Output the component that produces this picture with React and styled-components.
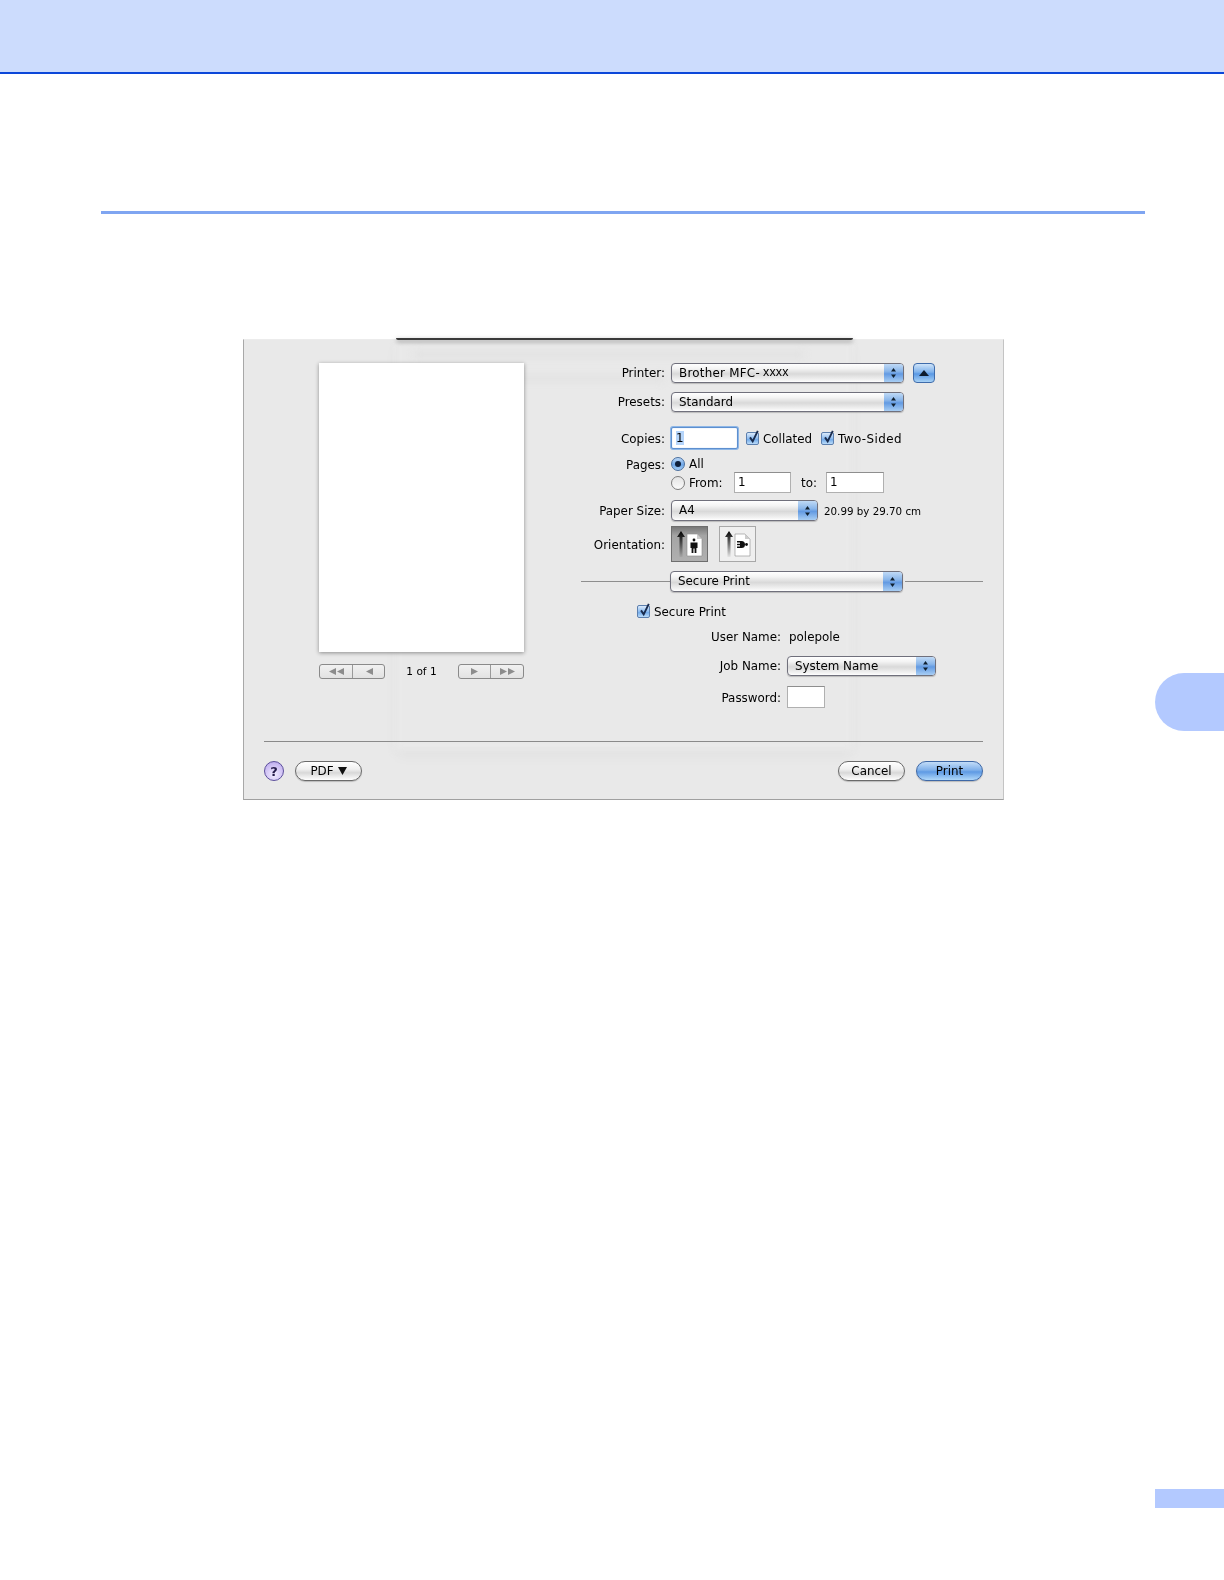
import React from "react";
import styled, { createGlobalStyle } from "styled-components";

const Global = createGlobalStyle`
  html, body { margin: 0; padding: 0; background: #fff; }
  body { font-family: "DejaVu Sans", "Liberation Sans", sans-serif; }
`;

const Page = styled.div`
  width: 1224px;
  height: 1580px;
  overflow: hidden;
  display: flex;
  flex-direction: column;
`;
const Header = styled.header`
  height: 72px;
  flex: none;
  background: #ccdcfd;
  border-bottom: 2px solid #0b47d9;
`;
const Rule = styled.div`
  height: 3px;
  flex: none;
  margin: 137px 79px 0 101px;
  background: #7fa5f1;
`;
const Middle = styled.div`
  display: flex;
  align-items: flex-start;
  margin: 125px 0 0 243px;
`;
const Tab = styled.div`
  width: 69px;
  height: 58px;
  margin: 334px 0 0 151px;
  flex: none;
  background: #b3c9ff;
  border-radius: 29px 0 0 29px;
`;
const FooterTab = styled.div`
  width: 69px;
  height: 19px;
  margin-top: 689px;
  align-self: flex-end;
  background: #b3c9ff;
`;

const Dialog = styled.section`
  position: relative;
  isolation: isolate;
  width: 761px;
  height: 461px;
  flex: none;
  box-sizing: border-box;
  background: #e9e9e9;
  border-left: 1px solid #a8a8a8;
  border-right: 1px solid #c4c4c4;
  border-bottom: 1px solid #a0a0a0;
  border-top: 1px solid #ececec;
  color: #000;
  font-size: 11.9px;
  filter: blur(0.3px);
  display: flex;
  flex-direction: column;
`;
const Ghost = styled.div`
  position: absolute;
  z-index: -1;
  left: 152px;
  top: 0;
  width: 456px;
  height: 410px;
  background: #e9e9e9;
  box-shadow: 0 6px 12px rgba(0, 0, 0, 0.035);
  filter: blur(3px);
`;
const GhostBar = styled.div`
  position: absolute;
  z-index: -1;
  left: ${(p) => p.$left}px;
  top: ${(p) => p.$top}px;
  width: ${(p) => p.$width}px;
  height: 5px;
  background: #dfdfdf;
  filter: blur(4px);
`;
const WindowEdge = styled.div`
  position: absolute;
  left: 152px;
  top: -2px;
  width: 457px;
  height: 2px;
  background: #3a3a3a;
  border-radius: 0 0 3px 3px;
  box-shadow: 0 2px 4px rgba(0, 0, 0, 0.4);
`;

const Body = styled.div`
  display: flex;
  align-items: flex-start;
  flex: none;
  height: 401px;
`;
const Preview = styled.div`
  width: 205px;
  margin: 23px 0 0 75px;
  flex: none;
  display: flex;
  flex-direction: column;
`;
const Sheet = styled.div`
  height: 289px;
  background: #fff;
  box-shadow: 0 1px 4px rgba(0, 0, 0, 0.4);
`;
const Pager = styled.div`
  display: flex;
  align-items: center;
  justify-content: space-between;
  margin-top: 12px;
  height: 15px;
`;
const PagerCount = styled.span`
  font-size: 10.6px;
  position: relative;
  top: -1px;
`;
const PagerGroup = styled.div`
  width: 66px;
  height: 15px;
  box-sizing: border-box;
  display: flex;
  border: 1px solid #8a8a8a;
  border-radius: 3px;
  background: linear-gradient(#f1f1f1, #e2e2e2);
`;
const PagerBtn = styled.div`
  flex: ${(p) => p.$grow};
  display: flex;
  align-items: center;
  justify-content: center;
  & + & { border-left: 1px solid #9a9a9a; }
`;

const Form = styled.div`
  width: 402px;
  margin: 23px 0 0 57px;
  flex: none;
  display: flex;
  flex-direction: column;
`;
const Row = styled.div`
  display: flex;
  align-items: center;
  gap: ${(p) => p.$gap ?? 7}px;
  height: ${(p) => p.$h}px;
  margin-top: ${(p) => p.$top ?? 0}px;
  padding-left: ${(p) => p.$indent ?? 0}px;
`;
const Label = styled.span`
  width: ${(p) => p.$w ?? 84}px;
  margin-right: ${(p) => (p.$w ? 0 : -1)}px;
  padding-top: ${(p) => (p.$nudge ? 2 : 0)}px;
  flex: none;
  text-align: right;
  white-space: nowrap;
`;
const Value = styled.span`
  margin-left: ${(p) => p.$left ?? 2}px;
  padding-top: ${(p) => (p.$nudge ? 2 : 0)}px;
  white-space: nowrap;
  font-size: ${(p) => p.$size ?? 11.9}px;
`;
const SelectBox = styled.div`
  width: ${(p) => p.$w}px;
  height: ${(p) => p.$h ?? 20}px;
  flex: none;
  box-sizing: border-box;
  display: flex;
  border: 1px solid #70707c;
  border-radius: 4px;
  overflow: hidden;
  background: linear-gradient(#ffffff 0%, #f4f4f4 25%, #d9d9d9 55%, #f4f4f4 90%, #fff 100%);
  box-shadow: 0 1px 1px rgba(0, 0, 0, 0.2);
`;
const SelectText = styled.span`
  flex: 1;
  padding-left: 7px;
  line-height: ${(p) => p.$lh ?? 18}px;
  white-space: nowrap;
`;
const Cap = styled.span`
  width: 19px;
  flex: none;
  display: flex;
  align-items: center;
  justify-content: center;
  background: linear-gradient(#c0daf6 0%, #8ab6ea 40%, #639ae2 55%, #a8cef4 100%);
`;
const PrinterName = styled.span`
  letter-spacing: 0.25px;
`;
const Small = styled.span`
  font-family: "Liberation Sans", sans-serif;
  font-size: 12.5px;
  letter-spacing: 0.2px;
  position: relative;
  top: -1px;
  margin-left: 3px;
`;
const BlueBtn = styled.div`
  width: 22px;
  height: 20px;
  box-sizing: border-box;
  margin-left: 2px;
  display: flex;
  align-items: center;
  justify-content: center;
  border: 1px solid #3f6cab;
  border-radius: 4px;
  background: linear-gradient(#cfe4f9 0%, #7fb2ec 45%, #5a98e4 55%, #a8d2f6 100%);
`;
const Field = styled.div`
  width: ${(p) => p.$w}px;
  height: ${(p) => p.$h}px;
  flex: none;
  box-sizing: border-box;
  background: #fff;
  border: 1px solid ${(p) => (p.$focus ? "#5d8fcf" : "#b0b0b0")};
  border-top-color: ${(p) => (p.$focus ? "#5d8fcf" : "#8e8e8e")};
  box-shadow: ${(p) => (p.$focus ? "0 0 0 1px #8db6e6, inset 0 0 1px #8db6e6" : "none")};
  border-radius: ${(p) => (p.$focus ? 2 : 0)}px;
  padding-left: ${(p) => (p.$focus ? 4 : 3)}px;
  line-height: ${(p) => p.$h - 2}px;
`;
const Selected = styled.span`
  background: #b5d5fb;
`;
const CheckBox = styled.span`
  width: 13px;
  height: 13px;
  flex: none;
  position: relative;
  box-sizing: border-box;
  border: 1px solid #5c7fae;
  border-radius: 2px;
  background: linear-gradient(#dbeafb, #8dbcf0 50%, #74acea 60%, #bcdcf9);
  & > svg { position: absolute; left: 0; top: -4px; }
`;
const Check = styled.label`
  display: flex;
  align-items: center;
  gap: ${(p) => p.$gap ?? 4}px;
  white-space: nowrap;
  margin-left: ${(p) => p.$left ?? 0}px;
  letter-spacing: ${(p) => p.$track ?? 0}px;
`;
const CheckText = styled.span`
  padding-top: 2px;
`;
const Radio = styled.span`
  width: 14px;
  height: 14px;
  flex: none;
  box-sizing: border-box;
  border-radius: 50%;
  display: flex;
  align-items: center;
  justify-content: center;
  border: 1px solid ${(p) => (p.$on ? "#4a6f9f" : "#7c7c7c")};
  background: ${(p) => (p.$on ? "linear-gradient(#bcd8f7, #6ea7e8 55%, #a5cdf5)" : "linear-gradient(#e4e4e4, #fafafa)")};
  &::after {
    content: "";
    display: ${(p) => (p.$on ? "block" : "none")};
    width: 6px;
    height: 6px;
    border-radius: 50%;
    background: #0f1f3a;
  }
`;
const PagesStack = styled.div`
  display: flex;
  align-items: flex-start;
  gap: 7px;
  margin-top: 8px;
`;
const PagesOptions = styled.div`
  display: flex;
  flex-direction: column;
  gap: 1px;
`;
const PagesLabel = styled(Label)`
  line-height: 16px;
`;
const RadioLine = styled.div`
  display: flex;
  align-items: center;
  height: ${(p) => p.$h}px;
  gap: 4px;
  white-space: nowrap;
`;
const FromLabel = styled.span`
  width: 41px;
`;
const ToLabel = styled.span`
  width: 27px;
  padding-left: 6px;
  box-sizing: border-box;
  flex: none;
`;
const OrientBtn = styled.div`
  width: 37px;
  height: 36px;
  box-sizing: border-box;
  flex: none;
  margin-left: ${(p) => p.$left ?? 0}px;
  display: flex;
  align-items: center;
  justify-content: center;
  border: 1px solid ${(p) => (p.$on ? "#6e6e6e" : "#a8a8a8")};
  background: ${(p) => (p.$on ? "linear-gradient(#777, #a4a4a4 25%, #b0b0b0)" : "#efefef")};
`;
const SectionRow = styled.div`
  display: flex;
  align-items: center;
  height: 21px;
  margin-top: 9px;
`;
const Line = styled.div`
  height: 1px;
  background: #8e8e8e;
  flex: ${(p) => (p.$grow ? 1 : "none")};
  width: ${(p) => p.$w ?? 0}px;
  margin-left: ${(p) => p.$left ?? 0}px;
`;
const Divider = styled.div`
  height: 1px;
  flex: none;
  margin: 0 20px 0 20px;
  background: #8a8a8a;
`;
const Footer = styled.div`
  flex: none;
  display: flex;
  align-items: center;
  margin: 19px 20px 0 20px;
  height: 20px;
`;
const Help = styled.div`
  width: 20px;
  height: 20px;
  box-sizing: border-box;
  flex: none;
  border-radius: 50%;
  border: 1px solid #5c4f9c;
  background: radial-gradient(circle at 50% 70%, #f2ecff, #c8b8f2 70%, #a593dd);
  display: flex;
  align-items: center;
  justify-content: center;
  font-size: 13px;
  font-weight: bold;
  color: #241a4a;
`;
const Pill = styled.div`
  width: 67px;
  height: 20px;
  box-sizing: border-box;
  flex: none;
  margin-left: ${(p) => p.$left ?? 0}px;
  border-radius: 10px;
  border: 1px solid ${(p) => (p.$primary ? "#3e68a6" : "#6a6a6a")};
  background: ${(p) =>
    p.$primary
      ? "linear-gradient(#c2dcf8 0%, #7fb0ea 45%, #5e9ae4 55%, #b0d8fa 100%)"
      : "linear-gradient(#fff 0%, #f0f0f0 40%, #d8d8d8 60%, #fff 100%)"};
  display: flex;
  align-items: center;
  justify-content: center;
  gap: 4px;
  box-shadow: 0 1px 1px rgba(0, 0, 0, 0.2);
`;
const Spacer = styled.div`
  flex: 1;
`;

const Updown = () => (
  <svg width="9" height="14" viewBox="0 0 9 14">
    <path d="M4.5 2 7 5.5H2Z" fill="#10202f" />
    <path d="M4.5 12 2 8.5H7Z" fill="#10202f" />
  </svg>
);

const Select = ({ w, h, lh, children }) => (
  <SelectBox $w={w} $h={h}>
    <SelectText $lh={lh}>{children}</SelectText>
    <Cap><Updown /></Cap>
  </SelectBox>
);

const Tick = () => (
  <svg width="15" height="16" viewBox="0 0 15 16">
    <path d="M3 8.4 5.7 12.4 10.8 1.8" fill="none" stroke="#1a2c4e" strokeWidth="1.9" />
  </svg>
);

const Tri = ({ dir = 1, n = 1 }) => (
  <svg width={n * 8} height="9" viewBox={`0 0 ${n * 8} 9`}>
    {Array.from({ length: n }).map((_, i) => (
      <path
        key={i}
        d={dir > 0 ? `M${i * 8 + 1} 1 L${i * 8 + 8} 4.5 L${i * 8 + 1} 8Z` : `M${i * 8 + 8} 1 L${i * 8 + 1} 4.5 L${i * 8 + 8} 8Z`}
        fill="#8c8c8c"
      />
    ))}
  </svg>
);

const OrientIcon = ({ id, landscape }) => (
  <svg width="35" height="34" viewBox="0 0 35 34">
    <defs>
      <linearGradient id={id} x1="0" y1="0" x2="0" y2="1">
        <stop offset="0" stopColor="#000" />
        <stop offset="1" stopColor="#000" stopOpacity="0.05" />
      </linearGradient>
    </defs>
    <path d="M9 4 5 10H7.5V30H10.5V10H13Z" fill={`url(#${id})`} />
    <path d="M15 7H25L30 12V29H15Z" fill="#fff" stroke="#8a8a8a" strokeWidth="0.6" />
    <path d="M25 7V12H30Z" fill="#ccc" />
    {landscape ? (
      <>
        <path d="M17 14H21.5A3.5 3.5 0 0 1 21.5 21H17V19.5H20V15.5H17Z" fill="#111" />
        <path d="M17 16.8H22V18.2H17Z" fill="#111" />
        <circle cx="26.5" cy="17.5" r="1.4" fill="#111" />
      </>
    ) : (
      <>
        <circle cx="22" cy="13" r="1.4" fill="#111" />
        <path d="M18.5 15.5H25.5V21H24.4V26H22.6V21.5H21.4V26H19.6V21H18.5Z" fill="#111" />
      </>
    )}
  </svg>
);

export default function App() {
  return (
    <Page>
      <Global />
      <Header />
      <Rule />
      <Middle>
        <Dialog>
          <Ghost />
          <GhostBar $left={170} $top={12} $width={390} />
          <GhostBar $left={270} $top={36} $width={150} />
          <WindowEdge />
          <Body>
            <Preview>
              <Sheet />
              <Pager>
                <PagerGroup>
                  <PagerBtn $grow={34}><Tri dir={-1} n={2} /></PagerBtn>
                  <PagerBtn $grow={32}><Tri dir={-1} /></PagerBtn>
                </PagerGroup>
                <PagerCount>1 of 1</PagerCount>
                <PagerGroup>
                  <PagerBtn $grow={32}><Tri /></PagerBtn>
                  <PagerBtn $grow={34}><Tri n={2} /></PagerBtn>
                </PagerGroup>
              </Pager>
            </Preview>
            <Form>
              <Row $h={20}>
                <Label>Printer:</Label>
                <Select w={233}><PrinterName>Brother MFC-</PrinterName><Small>xxxx</Small></Select>
                <BlueBtn>
                  <svg width="10" height="6" viewBox="0 0 10 6"><path d="M5 0 10 6H0Z" fill="#0e1c2e" /></svg>
                </BlueBtn>
              </Row>
              <Row $h={20} $top={9}>
                <Label>Presets:</Label>
                <Select w={233}>Standard</Select>
              </Row>
              <Row $h={22} $top={15}>
                <Label $nudge>Copies:</Label>
                <Field $w={67} $h={22} $focus><Selected>1</Selected></Field>
                <Check $left={1}><CheckBox><Tick /></CheckBox><CheckText>Collated</CheckText></Check>
                <Check $left={2} $track={0.45}><CheckBox><Tick /></CheckBox><CheckText>Two-Sided</CheckText></Check>
              </Row>
              <PagesStack>
                <PagesLabel>Pages:</PagesLabel>
                <PagesOptions>
                  <RadioLine $h={14}><Radio $on />All</RadioLine>
                  <RadioLine $h={21}>
                    <Radio />
                    <FromLabel>From:</FromLabel>
                    <Field $w={57} $h={21}>1</Field>
                    <ToLabel>to:</ToLabel>
                    <Field $w={58} $h={21}>1</Field>
                  </RadioLine>
                </PagesOptions>
              </PagesStack>
              <Row $h={21} $top={7}>
                <Label>Paper Size:</Label>
                <Select w={147} h={21} lh={19}>A4</Select>
                <Value $size={10.3} $left={-1}>20.99 by 29.70 cm</Value>
              </Row>
              <Row $h={36} $top={5}>
                <Label $nudge>Orientation:</Label>
                <OrientBtn $on><OrientIcon id="o1" /></OrientBtn>
                <OrientBtn $left={4}><OrientIcon id="o2" landscape /></OrientBtn>
              </Row>
              <SectionRow>
                <Line $w={89} />
                <Select w={233} h={21} lh={19}>Secure Print</Select>
                <Line $grow $left={2} />
              </SectionRow>
              <Row $h={14} $top={12} $indent={56}>
                <Check $gap={4}><CheckBox><Tick /></CheckBox><CheckText>Secure Print</CheckText></Check>
              </Row>
              <Row $h={14} $top={11} $gap={6}>
                <Label $w={200} $nudge>User Name:</Label>
                <Value $nudge>polepole</Value>
              </Row>
              <Row $h={20} $top={13} $gap={6}>
                <Label $w={200}>Job Name:</Label>
                <Select w={149}>System Name</Select>
              </Row>
              <Row $h={22} $top={10} $gap={6}>
                <Label $w={200} $nudge>Password:</Label>
                <Field $w={38} $h={22} />
              </Row>
            </Form>
          </Body>
          <Divider />
          <Footer>
            <Help>?</Help>
            <Pill $left={11}>PDF<svg width="9" height="8" viewBox="0 0 9 8"><path d="M0 0H9L4.5 8Z" fill="#111" /></svg></Pill>
            <Spacer />
            <Pill>Cancel</Pill>
            <Pill $left={11} $primary>Print</Pill>
          </Footer>
        </Dialog>
        <Tab />
      </Middle>
      <FooterTab />
    </Page>
  );
}
